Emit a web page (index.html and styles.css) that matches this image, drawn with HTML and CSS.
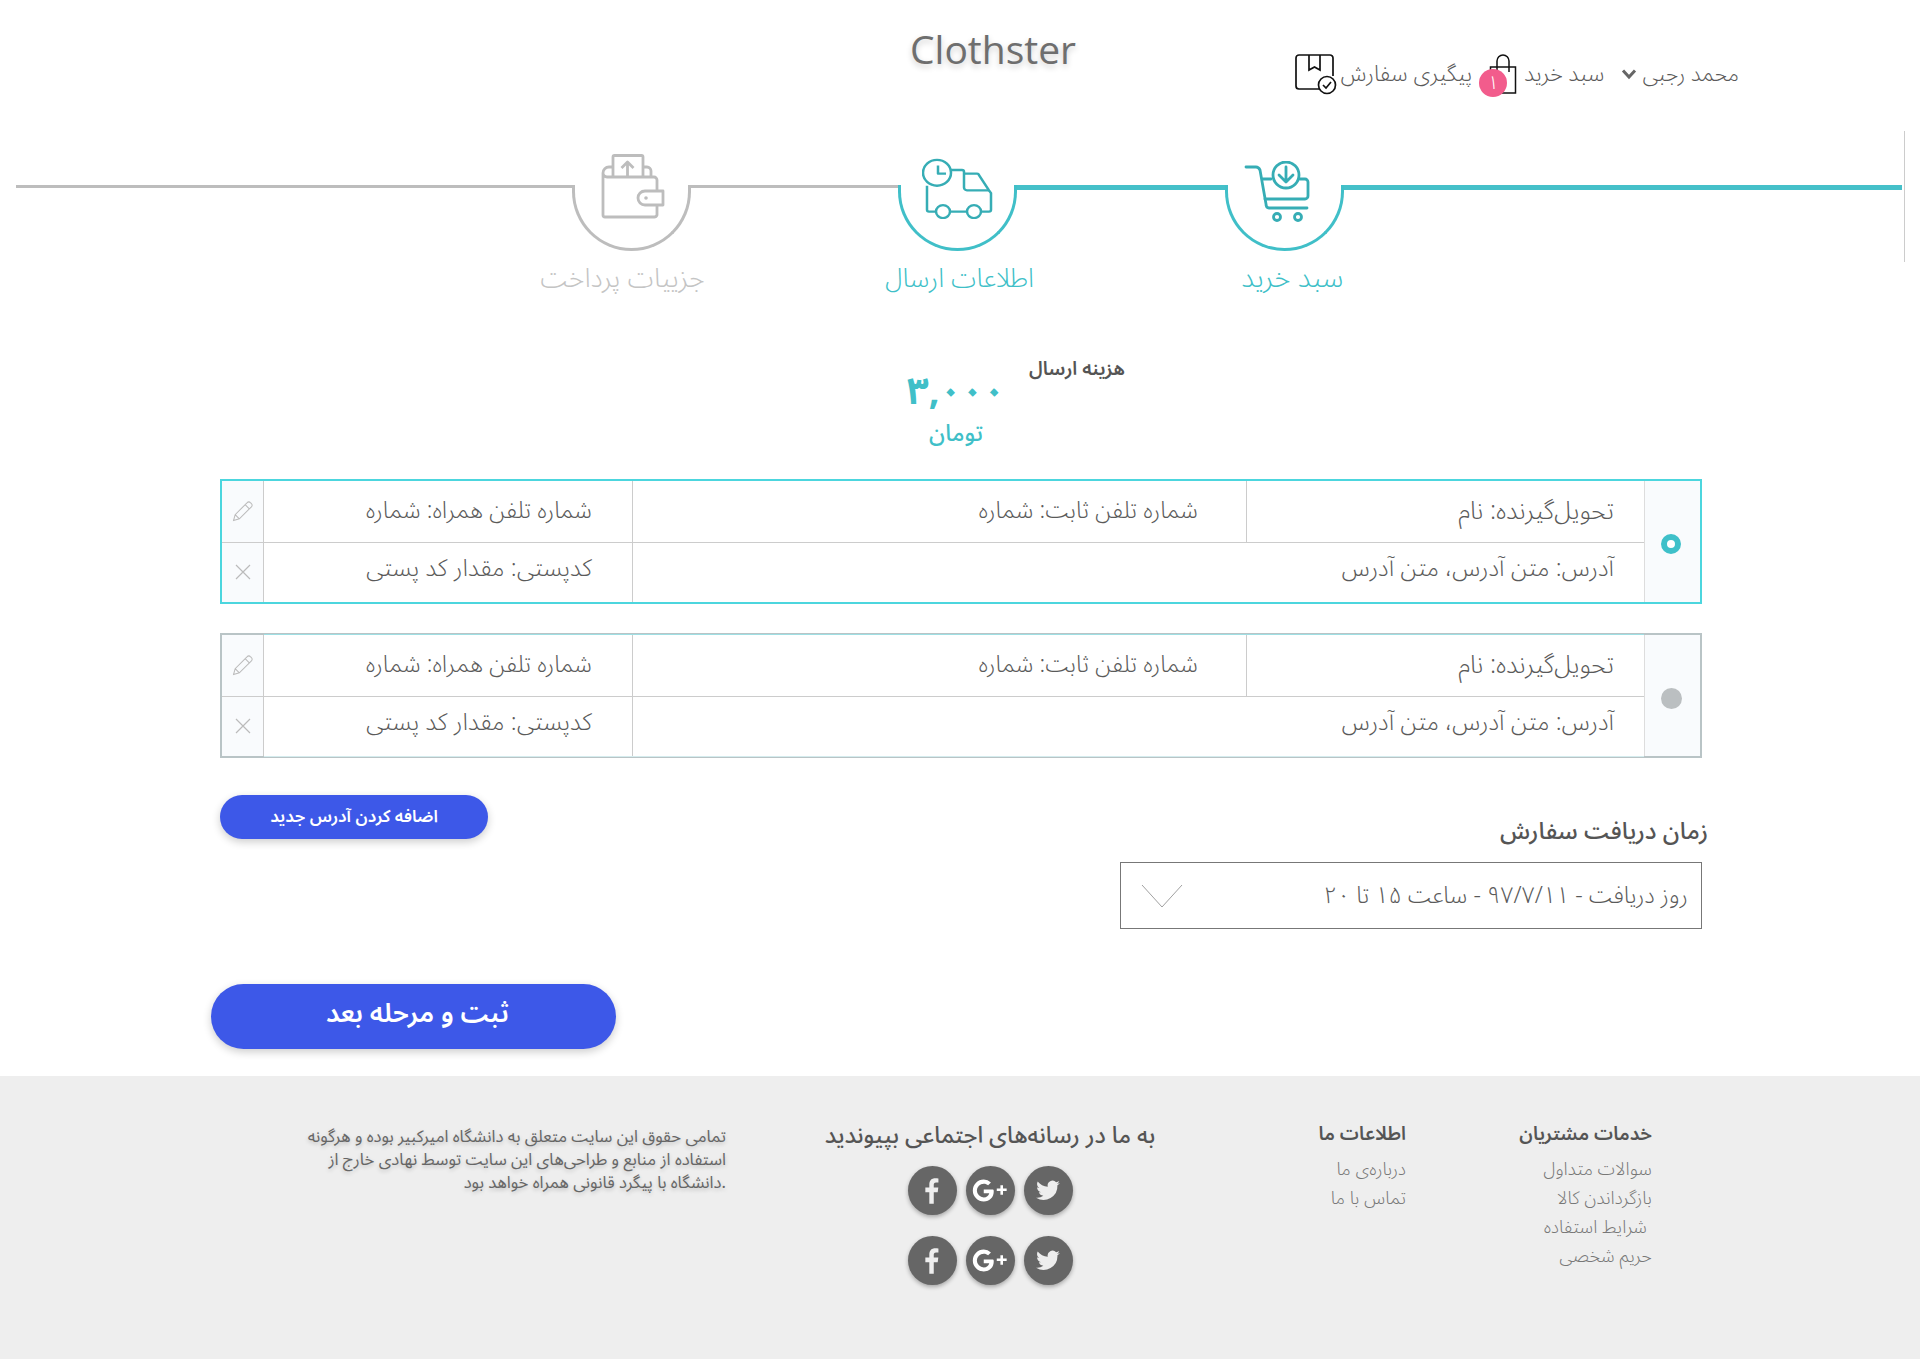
FILE: index.html
```html
<!DOCTYPE html>
<html lang="fa" dir="rtl">
  <head>
    <meta charset="utf-8" />
    <title>Clothster</title>
    <link rel="stylesheet" href="styles.css">
  </head>
  <body>
    <header class="top">
      <div class="brand">Clothster</div>
      <nav class="nav">
        <span class="nav-item">محمد رجبی</span>
        <svg class="chev" viewBox="0 0 16 12"><path d="M2 2.500 8 9l6-6.500" fill="none" stroke="#666" stroke-width="3"/></svg>
        <span class="nav-item nav-cart">سبد خرید</span>
        <span class="bag">
          <svg viewBox="0 0 28 40" width="28" height="40"><path d="M1.500 13h25v26h-25zM8 18V7a6 6 0 0 1 12 0v11" fill="none" stroke="#111" stroke-width="1.500"/></svg>
          <span class="badge">۱</span>
        </span>
        <span class="nav-item nav-track">پیگیری سفارش</span>
        <svg class="box" viewBox="0 0 42 41" width="42" height="41"><path d="M38 22V4a3 3 0 0 0-3-3H4a3 3 0 0 0-3 3v28a3 3 0 0 0 3 3h20M14 1v15l5.500-3 5.500 3V1" fill="none" stroke="#111" stroke-width="1.700"/><circle cx="32" cy="31" r="8.500" fill="#fff" stroke="#111" stroke-width="1.700"/><path d="m28 31 3 3 5-6" fill="none" stroke="#111" stroke-width="1.700"/></svg>
      </nav>
    </header>

    <section class="steps" dir="ltr">
      <div class="line grey l1"></div>
      <div class="step grey">
        <svg class="ic-wallet" viewBox="0 0 64 65" width="64" height="65"><g fill="none" stroke="#bdbdbd" stroke-width="2.800" stroke-linejoin="round"><path d="M2 19v42a2 2 0 0 0 2 2h49a3 3 0 0 0 3-2V26a3 3 0 0 0-3-3H6a4 4 0 0 1-4-4 6 6 0 0 1 6-6h4"/><path d="M12 23V3a1.500 1.500 0 0 1 1.500-1.500h27A1.500 1.500 0 0 1 42 3v20"/><path d="M42 13h4a4 4 0 0 1 4 4v6"/><path d="M26.500 22V8m-6 6 6-6 6 6"/><path d="M62 37H44a7 7 0 0 0 0 14h18z" fill="#fff"/></g><circle cx="45" cy="44" r="1.800" fill="#bdbdbd"/></svg>
        <div class="step-label lb-pay">جزییات پرداخت</div>
      </div>
      <div class="line grey l2"></div>
      <div class="step teal">
        <svg class="ic-truck" viewBox="0 0 72 66" width="72" height="61" preserveAspectRatio="none"><g fill="none" stroke="#36adb5" stroke-width="2.500" stroke-linejoin="round"><path d="M29 13h11a2 2 0 0 1 2 2v17a3 3 0 0 0 3 3h22"/><path d="M42 17h13a2 2 0 0 1 2 1.500L67 35l2 3v18a2 2 0 0 1-2 2h-8"/><path d="M5 30v26a2 2 0 0 0 2 2h7M28 58h17"/><circle cx="15" cy="16" r="14"/><path d="M16 8v9h8"/><circle cx="21" cy="58" r="7"/><circle cx="52" cy="58" r="7"/></g></svg>
        <div class="step-label lb-info">اطلاعات ارسال</div>
      </div>
      <div class="line teal l3"></div>
      <div class="step teal">
        <svg class="ic-cart" viewBox="0 0 66 62" width="66" height="62"><g fill="none" stroke="#36adb5" stroke-width="2.800" stroke-linecap="round" stroke-linejoin="round"><path d="M2 6h10c2 0 3 1 4 3l6 34c0 2 1 4 3 4h38"/><path d="M19 18h8M56 18h5a3 3 0 0 1 3 3v14a3 3 0 0 1-3 3H21"/><circle cx="42" cy="14" r="13"/><path d="M42 6v14m-7-6 7 7 7-7"/><circle cx="33" cy="56" r="3.500"/><circle cx="54" cy="56" r="3.500"/></g></svg>
        <div class="step-label lb-cart">سبد خرید</div>
      </div>
      <div class="line teal l4"></div>
    </section>
    <div class="scroll-mark"></div>

    <section class="cost">
      <div class="cost-title">هزینه ارسال</div>
      <div class="cost-value">
        <div class="cost-num">۳,۰۰۰</div>
        <div class="cost-unit">تومان</div>
      </div>
    </section>

    <main class="content">
      <div class="address active">
        <div class="addr-radio"><span class="dot on"></span></div>
        <div class="addr-body">
          <div class="addr-row">
            <div class="cell c-name">تحویل‌گیرنده: نام</div>
            <div class="cell c-tel">شماره تلفن ثابت: شماره</div>
            <div class="cell c-mob">شماره تلفن همراه: شماره</div>
          </div>
          <div class="addr-row">
            <div class="cell c-addr">آدرس: متن آدرس، متن آدرس</div>
            <div class="cell c-post">کدپستی: مقدار کد پستی</div>
          </div>
        </div>
        <div class="addr-tools">
          <div class="tool"><svg viewBox="0 0 20 20" width="21" height="21"><path d="M1.500 18.500 3 13 14.500 1.500a2 2 0 0 1 3 0l1 1a2 2 0 0 1 0 3L7 17zM3 13l4 4M12.500 3.500l4 4" fill="none" stroke="#bbb" stroke-width="1"/></svg></div>
          <div class="tool"><svg viewBox="0 0 16 16" width="16" height="16"><path d="m1 1 14 14M15 1 1 15" stroke="#bbb" stroke-width="1.200"/></svg></div>
        </div>
      </div>

      <div class="address">
        <div class="addr-radio"><span class="dot"></span></div>
        <div class="addr-body">
          <div class="addr-row">
            <div class="cell c-name">تحویل‌گیرنده: نام</div>
            <div class="cell c-tel">شماره تلفن ثابت: شماره</div>
            <div class="cell c-mob">شماره تلفن همراه: شماره</div>
          </div>
          <div class="addr-row">
            <div class="cell c-addr">آدرس: متن آدرس، متن آدرس</div>
            <div class="cell c-post">کدپستی: مقدار کد پستی</div>
          </div>
        </div>
        <div class="addr-tools">
          <div class="tool"><svg viewBox="0 0 20 20" width="21" height="21"><path d="M1.500 18.500 3 13 14.500 1.500a2 2 0 0 1 3 0l1 1a2 2 0 0 1 0 3L7 17zM3 13l4 4M12.500 3.500l4 4" fill="none" stroke="#bbb" stroke-width="1"/></svg></div>
          <div class="tool"><svg viewBox="0 0 16 16" width="16" height="16"><path d="m1 1 14 14M15 1 1 15" stroke="#bbb" stroke-width="1.200"/></svg></div>
        </div>
      </div>

      <div class="order-row">
        <div class="delivery">
          <div class="delivery-title">زمان دریافت سفارش</div>
          <div class="select">
            <span>روز دریافت - ۹۷/۷/۱۱ - ساعت ۱۵ تا ۲۰</span>
            <svg viewBox="0 0 42 24" width="42" height="24"><path d="m1 1 20 22L41 1" fill="none" stroke="#888" stroke-width="0.800"/></svg>
          </div>
        </div>
        <button class="btn small">اضافه کردن آدرس جدید</button>
      </div>

      <button class="btn big">ثبت و مرحله بعد</button>
    </main>

    <footer class="footer">
      <div class="foot-col col-services">
        <h4>خدمات مشتریان</h4>
        <a>سوالات متداول</a>
        <a>بازگرداندن کالا</a>
        <a class="indent">شرایط استفاده</a>
        <a>حریم شخصی</a>
      </div>
      <div class="foot-col col-about">
        <h4>اطلاعات ما</h4>
        <a>درباره‌ی ما</a>
        <a>تماس با ما</a>
      </div>
      <div class="foot-social">
        <h3>به ما در رسانه‌های اجتماعی بپیوندید</h3>
        <div class="social-row" dir="ltr">
          <span class="social"><svg viewBox="0 0 24 24" width="28" height="28"><path d="M13.500 23V13h3.400l.5-4h-3.900V6.700c0-1.200.4-2 2-2h2V1.200C17.100 1.100 16 1 14.800 1c-3 0-5.100 1.800-5.100 5.200V9H6.300v4h3.400v10z" fill="#eee"/></svg></span>
          <span class="social"><svg viewBox="0 0 34 24" width="36" height="25"><path d="M20 11h-9v3.600h5.300c-.6 2.500-2.700 4-5.300 4a6.600 6.600 0 0 1 0-13.200c1.700 0 3.100.6 4.200 1.600l2.700-2.700A10.500 10.500 0 0 0 11 1.500a10.500 10.500 0 1 0 0 21c5.800 0 9.600-4 9.600-9.800 0-.6 0-1.100-.6-1.700zM27 7h2.500v3H33v2.500h-3.500V16H27v-3.500h-3.500V10H27z" fill="#fff"/></svg></span>
          <span class="social"><svg viewBox="0 0 24 24" width="26" height="26"><path d="M23 4.600c-.8.400-1.700.6-2.600.7.900-.6 1.600-1.400 2-2.500-.9.500-1.900.9-2.900 1.100A4.500 4.500 0 0 0 11.800 8C8 7.800 4.700 6 2.500 3.200c-1.200 2.100-.6 4.700 1.400 6-.7 0-1.400-.2-2-.6 0 2.200 1.500 4.100 3.600 4.500-.7.200-1.400.2-2 .1.600 1.800 2.200 3.100 4.200 3.100A9 9 0 0 1 1 18.200 12.800 12.800 0 0 0 20.700 6.800c.9-.6 1.700-1.400 2.300-2.200z" fill="#eee"/></svg></span>
        </div>
        <div class="social-row" dir="ltr">
          <span class="social"><svg viewBox="0 0 24 24" width="28" height="28"><path d="M13.500 23V13h3.400l.5-4h-3.900V6.700c0-1.200.4-2 2-2h2V1.200C17.100 1.100 16 1 14.800 1c-3 0-5.100 1.800-5.100 5.200V9H6.300v4h3.400v10z" fill="#eee"/></svg></span>
          <span class="social"><svg viewBox="0 0 34 24" width="36" height="25"><path d="M20 11h-9v3.600h5.300c-.6 2.500-2.700 4-5.300 4a6.600 6.600 0 0 1 0-13.200c1.700 0 3.100.6 4.200 1.600l2.700-2.700A10.500 10.500 0 0 0 11 1.500a10.500 10.500 0 1 0 0 21c5.800 0 9.600-4 9.600-9.800 0-.6 0-1.100-.6-1.700zM27 7h2.500v3H33v2.500h-3.500V16H27v-3.500h-3.500V10H27z" fill="#fff"/></svg></span>
          <span class="social"><svg viewBox="0 0 24 24" width="26" height="26"><path d="M23 4.600c-.8.400-1.700.6-2.600.7.900-.6 1.600-1.400 2-2.500-.9.500-1.900.9-2.900 1.100A4.500 4.500 0 0 0 11.800 8C8 7.800 4.700 6 2.500 3.200c-1.200 2.100-.6 4.700 1.400 6-.7 0-1.400-.2-2-.6 0 2.200 1.500 4.100 3.600 4.500-.7.200-1.400.2-2 .1.600 1.800 2.200 3.100 4.200 3.100A9 9 0 0 1 1 18.200 12.800 12.800 0 0 0 20.700 6.800c.9-.6 1.700-1.400 2.300-2.200z" fill="#eee"/></svg></span>
        </div>
      </div>
      <p class="foot-text" dir="ltr">تمامی حقوق این سایت متعلق به دانشگاه امیرکبیر بوده و هرگونه<br>استفاده از منابع و طراحی‌های این سایت توسط نهادی خارج از<br>دانشگاه با پیگرد قانونی همراه خواهد بود.</p>
    </footer>
  </body>
</html>
```

FILE: styles.css
```css
* {
  box-sizing: border-box;
}

body {
  margin: 0;
  height: 1359px;
  background: #fff;
  color: #666;
  font-family: "Noto Sans Arabic", "DejaVu Sans", sans-serif;
  overflow: hidden;
}

/* header */
.top {
  height: 131px;
  position: relative;
}

.brand {
  position: absolute;
  top: 22px;
  left: 910px;
  font-family: "Open Sans", sans-serif;
  font-size: 39px;
  line-height: 54px;
  color: #6e6e6e;
  text-shadow: 0 3px 6px rgba(0, 0, 0, 0.2);
}

.nav {
  position: absolute;
  top: 50px;
  right: 181px;
  display: flex;
  align-items: center;
  height: 48px;
  font-size: 21.500px;
  font-weight: 300;
  color: #5a5a5a;
}

.nav-item {
  white-space: nowrap;
}

.chev {
  width: 16px;
  height: 12px;
  margin-right: 5px;
}

.nav-cart {
  margin-right: 17px;
  font-size: 22px;
}

.bag {
  position: relative;
  width: 28px;
  height: 40px;
  margin-right: 7px;
}

.badge {
  position: absolute;
  top: 15px;
  right: 10px;
  width: 28px;
  height: 28px;
  border-radius: 50%;
  background: #f25c8c;
  color: #fff;
  font-size: 19px;
  line-height: 28px;
  text-align: center;
}

.nav-track {
  margin-right: 17px;
  font-size: 22px;
}

.box {
  margin-right: 4px;
}

/* checkout steps */
.steps {
  display: flex;
  align-items: flex-start;
  padding-left: 16px;
  height: 177px;
}

.line {
  margin-top: 54px;
}

.line.grey {
  height: 3px;
  background: #bdbdbd;
}

.line.teal {
  height: 5px;
  background: #45c0c9;
}

.l1 { width: 556px; }
.l2 { width: 207px; }
.l3 { width: 208px; }
.l4 { width: 558px; }

.step {
  position: relative;
  flex: none;
  width: 119px;
  height: 66px;
  margin-top: 54px;
  border: 3px solid;
  border-top: none;
  border-radius: 0 0 60px 60px;
}

.step.grey {
  border-color: #bdbdbd;
  color: #c4c4c4;
}

.step.teal {
  border-color: #40bfc8;
  color: #40bfc8;
}

.step svg {
  position: absolute;
  left: 50%;
  transform: translateX(-50%);
}

.ic-wallet { bottom: 29px; margin-left: 1px; }
.ic-truck { bottom: 29px; }
.ic-cart { bottom: 25px; margin-left: -8px; }

.step-label {
  position: absolute;
  top: 75px;
  left: 50%;
  transform: translateX(-50%);
  font-size: 27px;
  font-weight: 300;
  line-height: 38px;
  white-space: nowrap;
}

.lb-pay { margin-left: -9px; }
.lb-info { font-size: 26px; margin-left: 2px; }
.lb-cart { font-size: 28px; margin-left: 8px; }

.scroll-mark {
  position: absolute;
  top: 131px;
  left: 1904px;
  width: 1px;
  height: 131px;
  background: #ccc;
}

/* shipping cost */
.cost {
  display: flex;
  gap: 9px;
  height: 171px;
  padding-right: 795px;
}

.cost-title {
  width: 100px;
  margin-top: 41px;
  font-size: 19px;
  font-weight: 600;
  color: #555;
  white-space: nowrap;
}

.cost-value {
  width: 120px;
  margin-top: 61px;
  text-align: center;
  color: #40bfc8;
}

.cost-num {
  font-size: 38px;
  font-weight: 700;
  line-height: 46px;
}

.cost-unit {
  margin-top: 3px;
  font-size: 23px;
  font-weight: 500;
  line-height: 32px;
}

/* address cards */
.content {
  display: flex;
  flex-direction: column;
  width: 1482px;
  margin: 0 218px 0 220px;
  padding-bottom: 27px;
}

.address {
  display: flex;
  flex: none;
  width: 1482px;
  height: 125px;
  margin-bottom: 29px;
  border: 2px solid #b9c4c6;
  background: #fff;
}

.address.active {
  border-color: #4cd6de;
}

.address:not(.active) .addr-body {
  box-shadow: 0 -1px 0 #9fdfe4, 0 1px 0 #d5ecee;
}

.addr-radio {
  flex: none;
  width: 56px;
  padding: 5px 3px 0 0;
  background: #f9fbfd;
  border-left: 1px solid #ddd;
  display: flex;
  align-items: center;
  justify-content: center;
}

.dot {
  width: 21px;
  height: 21px;
  border-radius: 50%;
  background: #bbbfc1;
}

.dot.on {
  width: 20px;
  height: 20px;
  background: #fff;
  border: 6px solid #3fc0c9;
}

.addr-body {
  flex: 1;
}

.addr-row {
  display: flex;
  height: 60.500px;
}

.addr-row + .addr-row {
  border-top: 1px solid #ccc;
}

.cell {
  display: flex;
  align-items: center;
  padding-bottom: 1px;
  font-size: 24px;
  font-weight: 300;
  color: #5a5a5a;
  white-space: nowrap;
}

.c-name {
  width: 398px;
  padding-right: 30px;
  border-left: 1px solid #ccc;
  font-size: 25px;
}

.c-tel {
  width: 614px;
  padding-right: 48px;
  border-left: 1px solid #ccc;
  font-size: 23.300px;
}

.c-addr {
  width: 1012px;
  padding-right: 30px;
  padding-bottom: 7px;
  border-left: 1px solid #ccc;
}

.c-mob,
.c-post {
  flex: 1;
  padding-right: 40px;
}

.c-mob {
  font-size: 23.300px;
}

.c-post {
  padding-bottom: 7px;
}

.addr-tools {
  flex: none;
  width: 42px;
  background: #f9fbfd;
  border-right: 1px solid #ccc;
}

.tool {
  height: 60.500px;
  display: flex;
  align-items: center;
  justify-content: center;
}

.tool + .tool {
  border-top: 1px solid #ccc;
}

/* delivery time + buttons */
.order-row {
  display: flex;
  justify-content: space-between;
  align-items: flex-start;
}

.delivery {
  width: 582px;
  margin-top: 29px;
}

.delivery-title {
  margin-right: -6px;
  font-size: 24px;
  font-weight: 500;
  line-height: 32px;
  color: #555;
}

.select {
  display: flex;
  align-items: center;
  justify-content: space-between;
  height: 67px;
  margin-top: 14px;
  padding: 0 13px 0 20px;
  border: 1px solid #777;
  font-size: 23.200px;
  font-weight: 300;
  color: #5a5a5a;
}

.btn {
  display: block;
  flex: none;
  border: none;
  background: #3d58e8;
  color: #fff;
  font-family: inherit;
  font-weight: 600;
  box-shadow: 0 3px 8px rgba(0, 0, 0, 0.2);
}

.btn.small {
  width: 268px;
  height: 44px;
  margin-top: 8px;
  border-radius: 22px;
  font-size: 17px;
}

.btn.big {
  align-self: flex-end;
  width: 405px;
  height: 65px;
  margin-top: 55px;
  margin-left: -9px;
  padding: 0 0 6px 8px;
  border-radius: 33px;
  font-size: 26.500px;
}

/* footer */
.footer {
  display: flex;
  height: 284px;
  padding-top: 43px;
  padding-right: 268px;
  background: #eee;
}

.foot-col {
  display: flex;
  flex: none;
  flex-direction: column;
  width: 246px;
  font-size: 18px;
  font-weight: 300;
  color: #777;
}

.foot-col a {
  line-height: 29px;
}

.foot-col a.indent {
  padding-right: 5px;
}

.foot-col h4,
.foot-social h3 {
  margin: 0;
  color: #555;
}

.foot-col h4 {
  font-size: 19px;
  font-weight: 600;
  line-height: 30px;
  margin-bottom: 6px;
}

.foot-social {
  flex: none;
  width: 340px;
  text-align: center;
}

.foot-social h3 {
  font-size: 23px;
  font-weight: 500;
  line-height: 34px;
  margin-bottom: 13px;
  white-space: nowrap;
}

.social-row {
  display: flex;
  justify-content: center;
  gap: 9px;
  margin-bottom: 21px;
}

.social {
  width: 49px;
  height: 49px;
  border-radius: 50%;
  background: #666;
  box-shadow: 0 2px 4px rgba(0, 0, 0, 0.3);
  display: flex;
  align-items: center;
  justify-content: center;
}

.foot-text {
  flex: none;
  width: 425px;
  margin: 0 94px 0 0;
  padding-top: 6px;
  font-size: 16.700px;
  line-height: 23px;
  text-align: right;
  color: #666;
  text-shadow: 0 2px 4px rgba(0, 0, 0, 0.2);
}
```
